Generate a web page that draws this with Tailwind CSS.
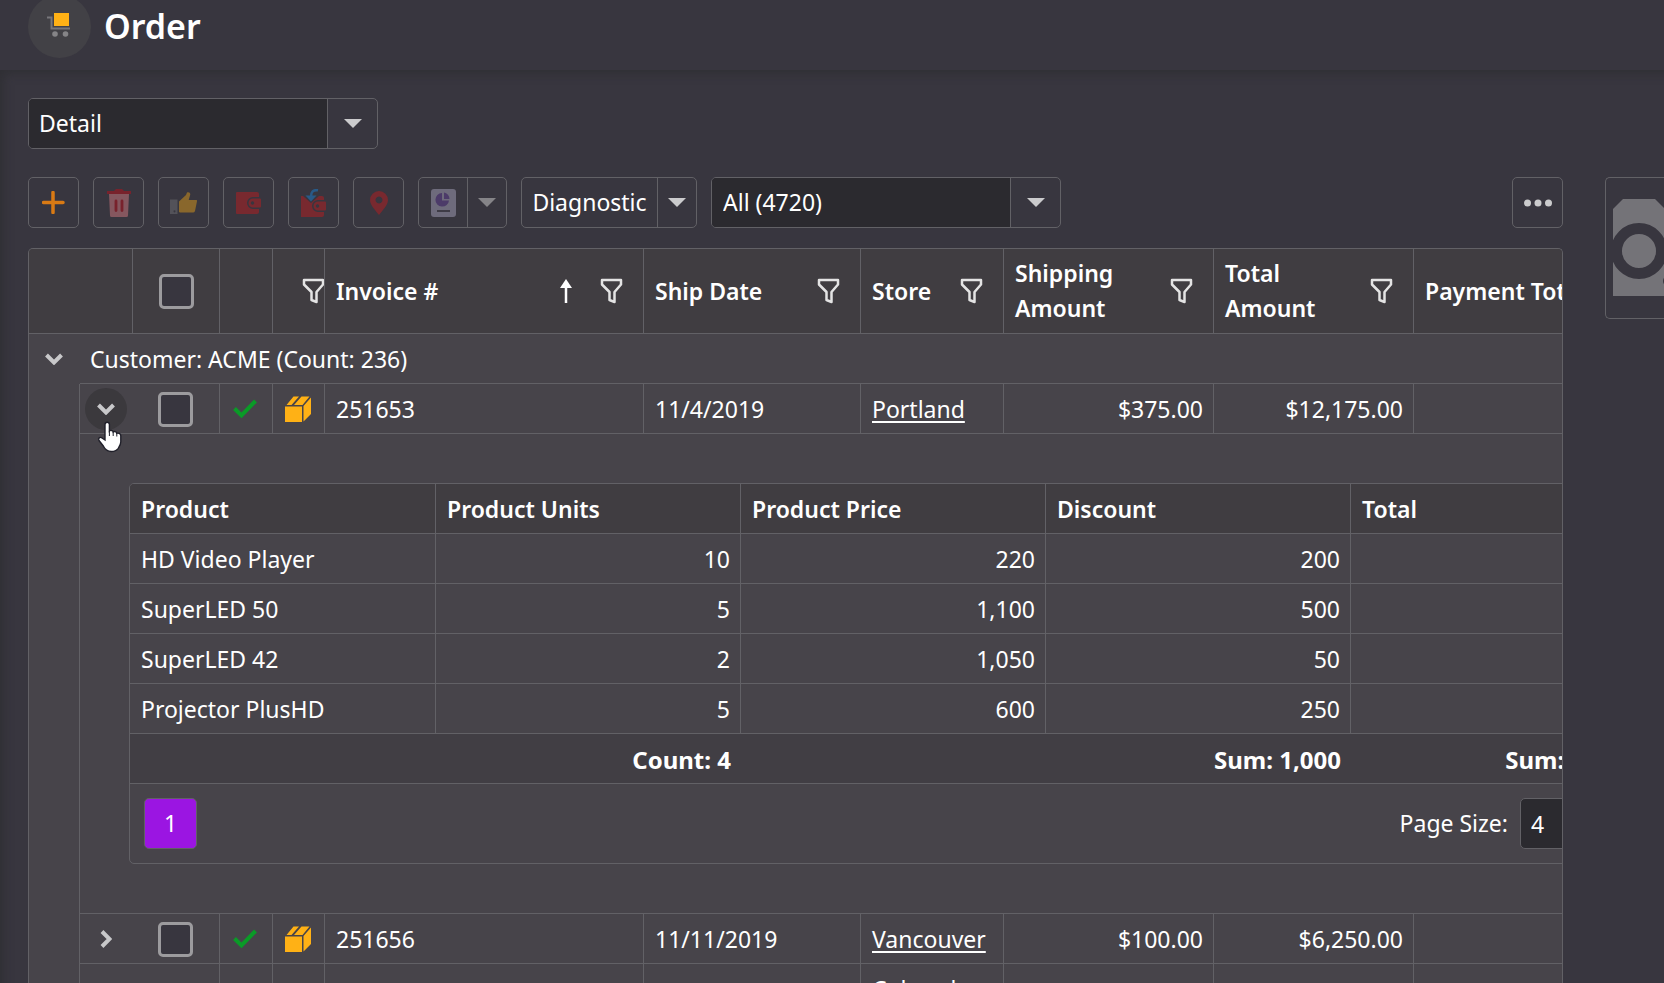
<!DOCTYPE html>
<html lang="en">
<head>
<meta charset="utf-8">
<title>Order</title>
<script src="https://cdn.jsdelivr.net/npm/@tailwindcss/browser@4"></script>
</head>
<body class="h-screen overflow-hidden bg-[#38363f] font-['Noto_Sans','Open_Sans',sans-serif] text-[23px] leading-[35px] text-white">
<svg class="hidden">
  <symbol id="funnel" viewBox="0 0 24 26"><path d="M2 2h19v4.500l-6.500 7.500v10l-5-2v-8L2 6.500z" fill="none" stroke="#e4e4e4" stroke-width="2.500" stroke-linejoin="round"/></symbol>
  <symbol id="caret" viewBox="0 0 18 9"><path d="M0 0h18L9 9z" fill="currentColor"/></symbol>
  <symbol id="down" viewBox="0 0 18 12"><path d="M1.500 2 9 9.500 16.500 2" fill="none" stroke="#c8c8ca" stroke-width="4"/></symbol>
  <symbol id="right" viewBox="0 0 12 18"><path d="M2 1.500 9.500 9 2 16.500" fill="none" stroke="#c8c8ca" stroke-width="4"/></symbol>
  <symbol id="check" viewBox="0 0 24 20"><path d="M1.500 9.500 8.500 16.500 22.500 2" fill="none" stroke="#0a9b27" stroke-width="4"/></symbol>
  <symbol id="box" viewBox="0 0 26 26"><path fill="#ffb115" d="M0 10.500h17V26H0zM18.500 10 26 1.500V18l-7.500 7.500zM1.500 9 8.500.500h5.500L6.500 9zM9 9 16.500.500h8L17.500 9z"/></symbol>
</svg>

<header class="flex h-[70px] items-start gap-[13px] pl-7">
  <div class="-mt-[5px] flex h-[63px] w-[63px] items-center justify-center rounded-full bg-[#424146]">
    <svg class="overflow-visible" width="24" height="24" viewBox="0 0 24 24"><path d="M-1 2.500h4.500V13.500H22" fill="none" stroke="#77767a" stroke-width="2"/><rect x="6" y="-2" width="15" height="13" fill="#ffb115"/><circle cx="7" cy="19" r="2.800" fill="#858487"/><circle cx="17.500" cy="19" r="2.800" fill="#858487"/></svg>
  </div>
  <h1 class="pt-[2px] text-[34px] font-semibold leading-[48px]">Order</h1>
</header>

<main class="flex h-[913px] items-start gap-[42px] pl-7 pt-7 shadow-[inset_8px_8px_10px_-4px_#303035]">
  <div class="min-w-0 flex-1">
    <div class="flex h-[51px] w-[350px] overflow-hidden rounded-[5px] border border-[#626166]">
      <input aria-label="View" value="Detail" class="min-w-0 flex-1 bg-[#2b2a2f] px-[10px] outline-none">
      <button aria-label="Choose view" class="flex w-[50px] items-center justify-center border-l border-[#626166] text-[#cbcbcd]"><svg width="18" height="9"><use href="#caret"/></svg></button>
    </div>

    <div class="mt-[28px] flex h-[51px] gap-[14px]">
      <button aria-label="New" class="flex w-[51px] items-center justify-center rounded-[5px] border border-[#626166]"><svg width="23" height="23" viewBox="0 0 23 23"><path d="M11 1.500v20M1.500 11.500h19.500" stroke="#d97a14" stroke-width="3.500" stroke-linecap="round"/></svg></button>
      <button aria-label="Delete" class="flex w-[51px] items-center justify-center rounded-[5px] border border-[#626166]"><svg width="24" height="28" viewBox="0 0 24 28"><path d="M2 5h20l-1 21.500a1.500 1.500 0 0 1-1.500 1.500h-15A1.500 1.500 0 0 1 3 26.500z" fill="#85575f"/><path d="M0 2h7l2-2h6l2 2h7v3H0z" fill="#78222c"/><path d="M9 12v9.500M15 12v9.500" stroke="#78222c" stroke-width="2.800" stroke-linecap="round"/></svg></button>
      <button aria-label="Approve" class="flex w-[51px] items-center justify-center rounded-[5px] border border-[#626166]"><svg width="27" height="22" viewBox="0 0 27 22"><path d="M0 7.500h7.500V22H0zM4.500 18.200a1 1 0 1 0 .01 0" fill="#535259" fill-rule="evenodd"/><path d="M9 20V9.500L16 3l1-2.500c2-1 4 .500 3 3L18.700 8H26a1 1 0 0 1 1 1.300l-2 9.700q-.500 1.500-2 1.500H10z" fill="#89672c"/></svg></button>
      <button aria-label="Pay" class="flex w-[51px] items-center justify-center rounded-[5px] border border-[#626166]"><svg width="25" height="22" viewBox="0 0 25 22"><path d="M1 0h20q2 0 2 2v3h-6a6 6 0 0 0 0 12h6v3q0 2-2 2H1q-1 0-1-1V1q0-1 1-1z" fill="#78292f"/><path d="M17 6.500h7q1 0 1 1v7q0 1-1 1h-7a4.500 4.500 0 0 1 0-9zM16.500 9.300a1.700 1.700 0 1 0 .01 0" fill="#78292f" fill-rule="evenodd"/></svg></button>
      <button aria-label="Refund" class="flex w-[51px] items-center justify-center rounded-[5px] border border-[#626166]"><svg width="25" height="28" viewBox="0 0 25 28"><path d="M0 7h2l8 7 8-7h3q2 0 2 2v2h-6a6 6 0 0 0 0 12h6v3q0 2-2 2H0z" fill="#78292f"/><path d="M17 12.500h7q1 0 1 1v7q0 1-1 1h-7a4.500 4.500 0 0 1 0-9zM16.500 15.300a1.700 1.700 0 1 0 .01 0" fill="#78292f" fill-rule="evenodd"/><path d="M17 1.300C12 .500 10 3 10 8" fill="none" stroke="#285a88" stroke-width="2.500"/><path d="M4.500 6.500h11L10 12.500z" fill="#285a88"/></svg></button>
      <button aria-label="Show on map" class="flex w-[51px] items-center justify-center rounded-[5px] border border-[#626166]"><svg width="18" height="24" viewBox="0 0 18 24"><path d="M9 0a9 9 0 0 1 9 9c0 5-6 11-9 15C6 20 0 14 0 9a9 9 0 0 1 9-9zM9 5.500a3.500 3.500 0 1 0 .01 0" fill="#78292f" fill-rule="evenodd"/></svg></button>
      <div class="flex w-[89px] rounded-[5px] border border-[#626166]">
        <button aria-label="Report" class="flex flex-1 items-center justify-center"><svg width="25" height="28" viewBox="0 0 25 28"><rect width="25" height="28" rx="3" fill="#6e6b7c"/><path d="M11 4v7.500h7A6.800 6.800 0 1 1 11 4z" fill="#4c3b69"/><path d="M13 3.500a6.500 6.500 0 0 1 5.500 6.500H13z" fill="#4c3b69"/><path d="M6 22h13" stroke="#3e3b46" stroke-width="2"/></svg></button>
        <button aria-label="Report options" class="flex w-[39px] items-center justify-center border-l border-[#626166] text-[#858488]"><svg width="18" height="9"><use href="#caret"/></svg></button>
      </div>
      <div class="flex w-[176px] rounded-[5px] border border-[#626166]">
        <button class="flex-1 text-center">Diagnostic</button>
        <button aria-label="Diagnostic options" class="flex w-[39px] items-center justify-center border-l border-[#626166] text-[#cbcbcd]"><svg width="18" height="9"><use href="#caret"/></svg></button>
      </div>
      <div class="flex w-[350px] overflow-hidden rounded-[5px] border border-[#626166]">
        <input aria-label="Filter" value="All (4720)" class="min-w-0 flex-1 bg-[#2b2a2f] px-[11px] outline-none">
        <button aria-label="Choose filter" class="flex w-[50px] items-center justify-center border-l border-[#626166] text-[#cbcbcd]"><svg width="18" height="9"><use href="#caret"/></svg></button>
      </div>
      <button aria-label="More" class="ml-auto flex w-[51px] items-center justify-center rounded-[5px] border border-[#626166]"><svg width="28" height="8" viewBox="0 0 28 8" fill="#cbcbcd"><circle cx="3.500" cy="4" r="3.500"/><circle cx="14" cy="4" r="3.500"/><circle cx="24.500" cy="4" r="3.500"/></svg></button>
    </div>

    <div class="mt-[20px] overflow-hidden rounded-t-[5px] border border-b-0 border-[#626166] bg-[#47444a]">
      <table class="w-[1786px] table-fixed border-separate border-spacing-0 [&_td]:border-[#626166] [&_th]:border-[#626166] [&_th]:font-semibold">
        <colgroup><col class="w-[51px]"><col class="w-[53px]"><col class="w-[87px]"><col class="w-[53px]"><col class="w-[52px]"><col class="w-[319px]"><col class="w-[217px]"><col class="w-[143px]"><col class="w-[210px]"><col class="w-[200px]"><col></colgroup>
        <thead class="bg-[#403d41] text-left">
          <tr class="h-[85px] [&>th]:border-b [&>th]:border-r">
            <th colspan="2"></th>
            <th><input type="checkbox" aria-label="Select all" class="mx-auto block h-[35px] w-[35px] appearance-none rounded-[5px] border-3 border-[#9c9b9e] bg-[#38363f]"></th>
            <th></th>
            <th class="overflow-hidden"><button aria-label="Filter type" class="ml-[29px] block"><svg class="w-6" height="26"><use href="#funnel"/></svg></button></th>
            <th class="px-[11px]"><div class="flex items-center"><span class="flex-1">Invoice #</span><svg width="12" height="24" viewBox="0 0 12 24"><path d="M6 5v19" stroke="#fff" stroke-width="2.500"/><path d="M0 9 6 0l6 9z" fill="#fff"/></svg><button aria-label="Filter invoice" class="ml-[28px] mr-[8px]"><svg class="block" width="24" height="26"><use href="#funnel"/></svg></button></div></th>
            <th class="px-[11px]"><div class="flex items-center justify-between"><span>Ship Date</span><button aria-label="Filter ship date" class="mr-[8px]"><svg class="block" width="24" height="26"><use href="#funnel"/></svg></button></div></th>
            <th class="px-[11px]"><div class="flex items-center justify-between"><span>Store</span><button aria-label="Filter store" class="mr-[8px]"><svg class="block" width="24" height="26"><use href="#funnel"/></svg></button></div></th>
            <th class="px-[11px]"><div class="flex items-center justify-between"><span>Shipping<br>Amount</span><button aria-label="Filter shipping amount" class="mr-[8px]"><svg class="block" width="24" height="26"><use href="#funnel"/></svg></button></div></th>
            <th class="px-[11px]"><div class="flex items-center justify-between"><span>Total<br>Amount</span><button aria-label="Filter total amount" class="mr-[8px]"><svg class="block" width="24" height="26"><use href="#funnel"/></svg></button></div></th>
            <th class="whitespace-nowrap px-[11px]">Payment Total</th>
          </tr>
        </thead>
        <tbody>
          <tr class="h-[50px]">
            <td><button aria-label="Collapse group" class="ml-[16px] block"><svg width="18" height="12"><use href="#down"/></svg></button></td>
            <td colspan="10" class="border-b pl-[10px] pt-px">Customer: ACME (Count: 236)</td>
          </tr>
          <tr class="h-[50px] [&>td]:border-b [&>td]:border-r [&>td]:pt-px">
            <td rowspan="4"></td>
            <td class="border-r-0! pt-0!"><div class="relative ml-[5px] h-[42px] w-[42px]"><button aria-label="Collapse row" class="flex h-[42px] w-[42px] items-center justify-center rounded-full bg-[#3b393d]"><svg width="18" height="12"><use href="#down"/></svg></button>
              <svg class="absolute left-[12px] top-[33px]" width="26" height="32" viewBox="0 0 26 32"><path d="M8 3.500a2.200 2.200 0 0 1 4.400 0V10c1-1 3.500-.800 3.800 1 1-.800 3.300-.500 3.600 1.300 1.300-.600 4 .200 4 2.500v6c0 3-1.500 5-2.500 6.500-1.500 2-4 3.200-7 3.200-4.500 0-6.500-2.500-8-5.500L2 19.500c-1.200-2.200.800-4 3-2.500l3 2z" fill="#fff" stroke="#20202a" stroke-width="1.400"/><path d="M12.400 10v5M16.200 11v4M19.800 12v3.500" stroke="#20202a"/></svg></div></td>
            <td class="pr-[2px]"><input type="checkbox" aria-label="Select 251653" class="mx-auto block h-[35px] w-[35px] appearance-none rounded-[5px] border-3 border-[#9c9b9e] bg-[#38363f]"></td>
            <td class="pr-[2px]"><svg class="mx-auto block" width="24" height="20"><use href="#check"/></svg></td>
            <td class="pr-[2px]"><svg class="mx-auto block" width="26" height="26"><use href="#box"/></svg></td>
            <td class="px-[11px]">251653</td><td class="px-[11px]">11/4/2019</td>
            <td class="px-[11px]"><a href="#" class="underline decoration-2 underline-offset-3">Portland</a></td>
            <td class="px-[10px] text-right">$375.00</td><td class="px-[10px] text-right">$12,175.00</td><td></td>
          </tr>
          <tr>
            <td colspan="10" class="border-b pb-[49px] pl-[49px] pt-[49px]">
              <div class="w-[1528px] overflow-hidden rounded-[5px] border border-[#626166]">
                <table class="w-full table-fixed border-separate border-spacing-0 [&_tr]:h-[50px] [&_td]:border-b [&_td]:pl-[11px] [&_td]:pr-[10px] [&_td]:pt-px [&_th]:border-b [&_th]:border-r [&_th]:px-[11px] [&_th]:pt-px">
                  <colgroup><col class="w-[306px]"><col class="w-[305px]"><col class="w-[305px]"><col class="w-[305px]"><col class="w-[305px]"></colgroup>
                  <thead class="bg-[#403d41] text-left"><tr><th>Product</th><th>Product Units</th><th>Product Price</th><th>Discount</th><th>Total</th></tr></thead>
                  <tbody class="text-right [&_td]:border-r [&_td:first-child]:text-left">
                    <tr><td>HD Video Player</td><td>10</td><td>220</td><td>200</td><td>2,000</td></tr>
                    <tr><td>SuperLED 50</td><td>5</td><td>1,100</td><td>500</td><td>5,000</td></tr>
                    <tr><td>SuperLED 42</td><td>2</td><td>1,050</td><td>50</td><td>2,050</td></tr>
                    <tr><td>Projector PlusHD</td><td>5</td><td>600</td><td>250</td><td>2,750</td></tr>
                  </tbody>
                  <tfoot class="bg-[#413e44] text-right text-[24px] font-bold"><tr><td></td><td>Count: 4</td><td></td><td>Sum: 1,000</td><td>Sum: 11,800</td></tr></tfoot>
                </table>
                <div class="flex h-[79px] items-center justify-between pl-[14px]">
                  <button class="h-[51px] w-[53px] rounded-[5px] border border-[#626166] bg-[#9b15e2]">1</button>
                  <div class="flex items-center gap-[12px] pr-[14px]"><label for="page-size">Page Size:</label><input id="page-size" value="4" class="h-[51px] w-[122px] rounded-[5px] border border-[#626166] bg-[#2b2a2f] px-[10px]"></div>
                </div>
              </div>
            </td>
          </tr>
          <tr class="h-[50px] [&>td]:border-b [&>td]:border-r [&>td]:pt-px">
            <td class="border-r-0!"><button aria-label="Expand row" class="ml-[20px] block"><svg width="12" height="18"><use href="#right"/></svg></button></td>
            <td class="pr-[2px]"><input type="checkbox" aria-label="Select 251656" class="mx-auto block h-[35px] w-[35px] appearance-none rounded-[5px] border-3 border-[#9c9b9e] bg-[#38363f]"></td>
            <td class="pr-[2px]"><svg class="mx-auto block" width="24" height="20"><use href="#check"/></svg></td>
            <td class="pr-[2px]"><svg class="mx-auto block" width="26" height="26"><use href="#box"/></svg></td>
            <td class="px-[11px]">251656</td><td class="px-[11px]">11/11/2019</td>
            <td class="px-[11px]"><a href="#" class="underline decoration-2 underline-offset-3">Vancouver</a></td>
            <td class="px-[10px] text-right">$100.00</td><td class="px-[10px] text-right">$6,250.00</td><td></td>
          </tr>
          <tr class="h-[85px] [&>td]:border-r">
            <td class="border-r-0!"></td><td></td><td></td><td></td><td></td><td></td>
            <td class="px-[11px]"><a href="#" class="underline decoration-2 underline-offset-3">Colorado Springs</a></td>
            <td></td><td></td><td></td>
          </tr>
        </tbody>
      </table>
    </div>
  </div>

  <aside class="mt-[79px] h-[142px] w-[59px] overflow-hidden rounded-l-[5px] border border-r-0 border-[#626166] pl-[7px] pt-[21px]">
    <svg width="52" height="97" viewBox="0 0 52 97"><path d="M0 10 10 0h32l10 10v87H0z" fill="#747378"/><circle cx="26" cy="52" r="22.500" fill="#747378" stroke="#38363f" stroke-width="11"/><circle cx="56" cy="82" r="6" fill="#38363f"/></svg>
  </aside>
</main>
</body>
</html>
